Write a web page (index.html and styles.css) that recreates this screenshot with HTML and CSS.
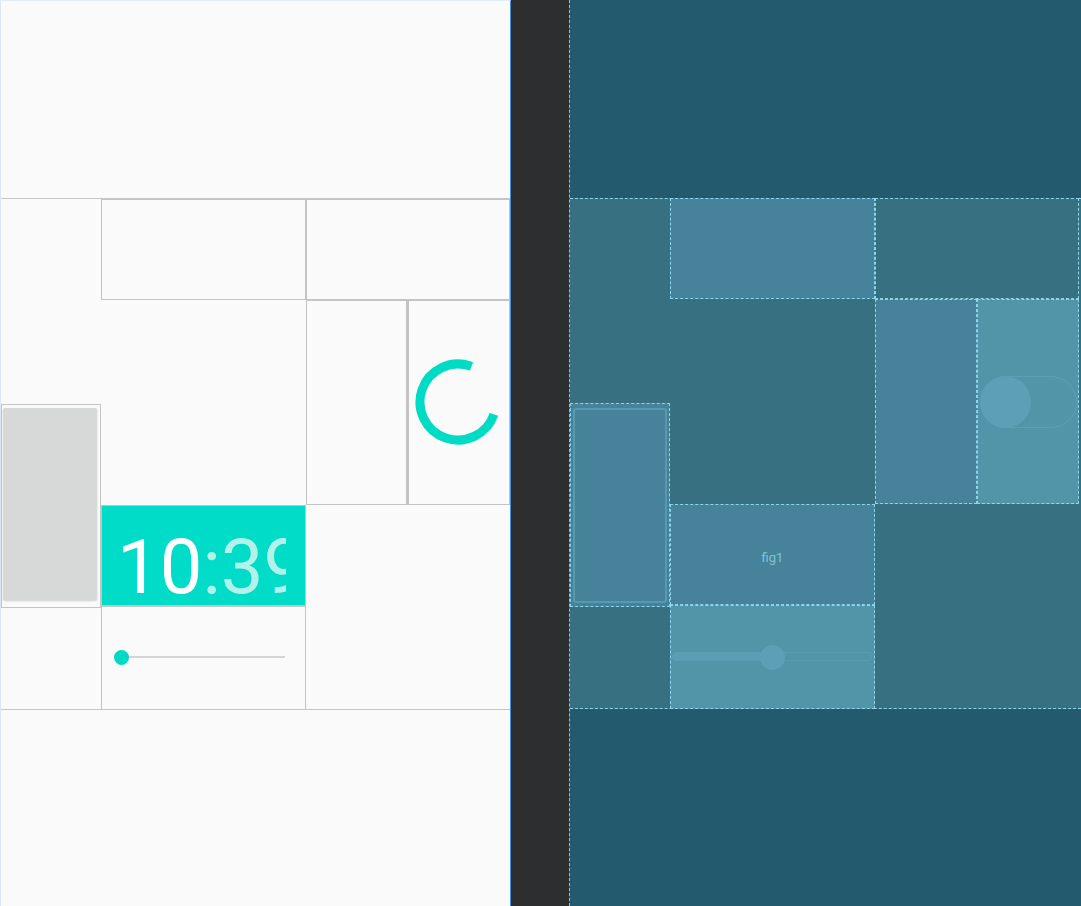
FILE: index.html
```html
<!DOCTYPE html>
<html>
<head>
<meta charset="utf-8">
<link rel="stylesheet" href="styles.css">
</head>
<body>
<div class="screen">
  <div class="panel design">
    <div class="frame"></div>
    <div class="box a"></div>
    <div class="box b"></div>
    <div class="box c"></div>
    <div class="box d">
      <svg class="spinner" width="86" height="86" viewBox="0 0 86 86">
        <circle cx="43" cy="43" r="38" fill="none" stroke="#00dbc6" stroke-width="9" stroke-dasharray="180 300" transform="rotate(19 43 43)"></circle>
      </svg>
    </div>
    <div class="box e"><div class="btn"></div></div>
    <div class="box f"><div class="clock"><span class="hh">10</span><span class="mm">:39</span></div></div>
    <div class="box g"><div class="seek"><span class="seek-thumb"></span></div></div>
  </div>
  <div class="gutter"></div>
  <div class="panel blueprint">
    <div class="frame"></div>
    <div class="box a"></div>
    <div class="box b"></div>
    <div class="box c"></div>
    <div class="box d"><div class="switch"><span class="switch-thumb"></span></div></div>
    <div class="box e"><div class="btn"></div></div>
    <div class="box f"><span class="label">fig1</span></div>
    <div class="box g">
      <div class="slider"><span class="slider-fill"></span><span class="slider-rest"></span><span class="slider-thumb"></span></div>
    </div>
  </div>
</div>
</body>
</html>
```

FILE: styles.css
```css
* { box-sizing: border-box; }
html, body { margin: 0; padding: 0; }
body { width: 1081px; height: 906px; overflow: hidden; background: #2c2d2f; font-family: Roboto, "Liberation Sans", sans-serif; }

.screen { display: flex; width: 1081px; height: 906px; }

.panel {
  display: grid;
  grid-template-columns: 100px 205px 102px 1fr;
  grid-template-rows: 198px 101px 104px 101px 101px 104px 1fr;
  height: 906px;
}

.frame { grid-column: 1 / -1; grid-row: 2 / 7; }
.box { position: relative; }
.a { grid-column: 2; grid-row: 2; }
.b { grid-column: 3 / 5; grid-row: 2; }
.c { grid-column: 3; grid-row: 3 / 5; }
.d { grid-column: 4; grid-row: 3 / 5; display: flex; align-items: center; justify-content: center; }
.e { grid-column: 1; grid-row: 4 / 6; margin-bottom: -2px; }
.f { grid-column: 2; grid-row: 5; }
.g { grid-column: 2; grid-row: 6; display: flex; align-items: center; }

/* design view */
.design {
  width: 511px;
  background: #fafafa;
  border-left: 1px solid #dce7f3;
  border-right: 1px solid #4b8ed6;
  border-top: 1px solid #e3ecf6;
}
.design .frame { border-top: 1px solid #c6c6c6; border-bottom: 1px solid #c6c6c6; margin-top: -1px; }
.design .box { border: 1px solid #c4c4c4; }
.design .c { border-right-width: 2px; }

.spinner { display: block; margin: -2px 0 0 -2px; }

.design .btn {
  margin: 3px 3px 7px 1px;
  height: calc(100% - 10px);
  background: #d7d8d8;
  border-radius: 2px;
  box-shadow: 0 1px 2px rgba(0, 0, 0, 0.18);
}

.design .f { background: #00dcc8; border-color: #bfc7c6; }
.clock {
  margin-left: 15px;
  width: 169px;
  overflow: hidden;
  white-space: nowrap;
  padding-top: 23px;
  font-size: 76px;
  line-height: 76px;
  font-weight: 400;
  font-family: Roboto, "Liberation Sans", sans-serif;
}
.hh { color: #ffffff; }
.mm { color: #b3f2eb; }

.seek { position: relative; margin: -2px 20px 0 19px; height: 2px; width: 100%; background: #d4d4d4; }
.seek-thumb {
  position: absolute; left: -7px; top: -6px;
  width: 15px; height: 15px; border-radius: 50%;
  background: #00d9c5;
}

/* gutter */
.gutter { width: 58px; background: #2d2e30; }

/* blueprint view */
.blueprint {
  flex: 1;
  background: #235a6d;
  border-left: 1px dashed #7fcbe2;
  grid-template-columns: 100px 205px 102px 102px 1fr;
}
.blueprint .frame { background: #377080; border-top: 1px dashed #8dd5ec; border-bottom: 1px dashed #8dd5ec; }
.blueprint .box { border: 1px dashed #8dd5ec; }
.blueprint .a { background: #46839a; }
.blueprint .b { background: #377080; }
.blueprint .c { background: #46839a; }
.blueprint .d { background: #5294a8; justify-content: flex-start; padding-left: 2px; }
.blueprint .e { background: #46839a; padding: 4px 2px 3px 2px; }
.blueprint .f { background: #46839a; display: flex; align-items: center; justify-content: center; padding-top: 6px; }
.blueprint .g { background: #5294a8; }

.blueprint .btn {
  height: 100%;
  border: 2px solid #5899ae;
  border-radius: 3px;
}

.label { color: #7fc2d8; font-size: 13px; font-family: Roboto, "Liberation Sans", sans-serif; }

.switch {
  position: relative;
  width: 97px; height: 52px;
  border: 1px solid #5d9fb4;
  border-radius: 26px;
}
.switch-thumb {
  position: absolute; left: -1px; top: -1px;
  width: 51px; height: 52px; border-radius: 50%;
  background: #5d9fb5;
}

.slider { position: relative; display: flex; width: 100%; margin: -1px 2px 0 1px; height: 9px; }
.slider-fill { flex: 1; background: #5b9eb4; border-radius: 5px 0 0 5px; }
.slider-rest { flex: 1; border: 1px solid #5a9bb0; border-left: none; border-radius: 0 5px 5px 0; }
.slider-thumb {
  position: absolute; left: 50%; top: 50%;
  width: 25px; height: 25px; margin: -12px 0 0 -12px;
  border-radius: 50%; background: #5d9fb5;
}
```
